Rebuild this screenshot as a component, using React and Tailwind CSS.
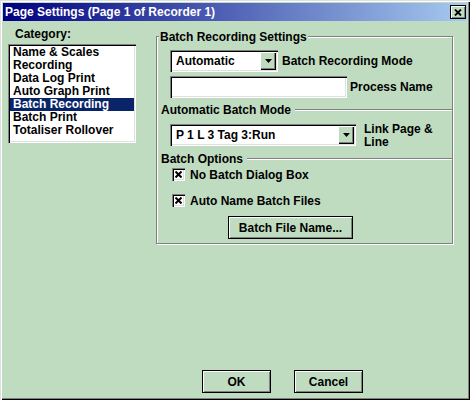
import React from 'react';

const raised = 'border border-black shadow-[inset_1px_1px_0_#fff,inset_-1px_-1px_0_#808080]';
const sunken = 'shadow-[inset_1px_1px_0_#808080,inset_2px_2px_0_#000,inset_-1px_-1px_0_#fff,inset_-2px_-2px_0_#dfdfdf]';

function DropArrow() {
    return (
        <div className="w-[16px] h-[18px] mr-[2px] bg-[#c0dcc0] shadow-[inset_1px_1px_0_#fff,inset_-1px_-1px_0_#000,inset_-2px_-2px_0_#808080] flex items-center justify-center">
            <svg width="7" height="4" viewBox="0 0 7 4">
                <polygon points="0,0 7,0 3.5,4" fill="#000" />
            </svg>
        </div>
    );
}

function Combo({ value, width }) {
    return (
        <div className={`h-[22px] bg-white flex items-center justify-between pl-[6px] ${sunken} ${width}`}>
            <span>{value}</span>
            <DropArrow />
        </div>
    );
}

function Separator({ label }) {
    return (
        <div className="flex items-center h-[14px] pl-[4px]">
            <span className="pr-[4px]">{label}</span>
            <div className="flex-1 h-[2px] border-t border-[#808080] border-b border-b-white" />
        </div>
    );
}

function Check({ label }) {
    return (
        <div className="flex items-center h-[13px] pl-[15px] gap-[5px]">
            <div className={`w-[13px] h-[13px] bg-white flex items-center justify-center ${sunken}`}>
                <svg width="7" height="7" viewBox="0 0 7 7">
                    <path d="M0.5 0.5 L6.5 6.5 M6.5 0.5 L0.5 6.5" stroke="#000" strokeWidth="2" />
                </svg>
            </div>
            <span>{label}</span>
        </div>
    );
}

export default function App() {
    const categories = [
        'Name & Scales',
        'Recording',
        'Data Log Print',
        'Auto Graph Print',
        'Batch Recording',
        'Batch Print',
        'Totaliser Rollover',
    ];

    return (
        <div className="w-[470px] h-[400px] bg-[#c0dcc0] pt-[3px] px-[3px] flex flex-col text-[12px] font-bold text-black font-['Liberation_Sans',Arial,sans-serif] shadow-[inset_1px_1px_0_#dfdfdf,inset_2px_2px_0_#fff,inset_-1px_-1px_0_#000,inset_-2px_-2px_0_#808080]">
            {/* Title bar */}
            <div className="h-[18px] flex items-center justify-between pl-[2px] pr-[1px] text-white bg-[linear-gradient(to_right,#000080,#a6caf0)]">
                <span className="leading-[14px]">Page Settings (Page 1 of Recorder 1)</span>
                <div className={`w-[16px] h-[14px] bg-[#c0dcc0] flex items-center justify-center ${raised}`}>
                    <svg width="8" height="7" viewBox="0 0 8 7">
                        <path d="M1 0.5 L7 6.5 M7 0.5 L1 6.5" stroke="#000" strokeWidth="1.8" />
                    </svg>
                </div>
            </div>

            <div className="flex">
                {/* Category list */}
                <div className="ml-[5px] w-[128px] flex flex-col">
                    <div className="ml-[7px] mt-[6px] h-[14px] leading-[14px]">Category:</div>
                    <div className={`mt-[3px] h-[99px] bg-white p-[2px] ${sunken}`}>
                        {categories.map((c) => (
                            <div
                                key={c}
                                className={`h-[13px] leading-[13px] pl-[3px] ${c === 'Batch Recording' ? 'bg-[#0a246a] text-white' : ''}`}
                            >
                                {c}
                            </div>
                        ))}
                    </div>
                </div>

                {/* Settings group */}
                <div className="ml-[20px] mt-[15px] w-[297px] h-[208px] border border-[#808080] shadow-[inset_1px_1px_0_#fff,1px_1px_0_#fff] flex flex-col">
                    <div className="-mt-[7px] ml-[2px] px-[1px] w-fit h-[14px] leading-[14px] bg-[#c0dcc0]">Batch Recording Settings</div>

                    <div className="mt-[6px] pl-[13px] flex items-center gap-[4px]">
                        <Combo value="Automatic" width="w-[108px]" />
                        <span>Batch Recording Mode</span>
                    </div>

                    <div className="mt-[4px] pl-[13px] flex items-center gap-[3px]">
                        <div className={`w-[177px] h-[22px] bg-white ${sunken}`} />
                        <span>Process Name</span>
                    </div>

                    <div className="mt-[5px]">
                        <Separator label="Automatic Batch Mode" />
                    </div>

                    <div className="mt-[7px] pl-[13px] flex items-start gap-[8px]">
                        <Combo value="P 1 L 3 Tag 3:Run" width="w-[186px]" />
                        <div className="leading-[13px] -mt-[1px]">
                            <div>Link Page &amp;</div>
                            <div>Line</div>
                        </div>
                    </div>

                    <div className="mt-[3px]">
                        <Separator label="Batch Options" />
                    </div>

                    <div className="mt-[2px]">
                        <Check label="No Batch Dialog Box" />
                    </div>
                    <div className="mt-[13px]">
                        <Check label="Auto Name Batch Files" />
                    </div>

                    <div className="mt-[9px] ml-[71px]">
                        <button className={`w-[125px] h-[23px] bg-[#c0dcc0] flex items-center justify-center ${raised}`}>
                            Batch File Name...
                        </button>
                    </div>
                </div>
            </div>

            <div className="flex-1" />

            <div className="flex mb-[7px] ml-[199px] gap-[23px]">
                <button className={`w-[69px] h-[23px] bg-[#c0dcc0] flex items-center justify-center ${raised}`}>OK</button>
                <button className={`w-[69px] h-[23px] bg-[#c0dcc0] flex items-center justify-center ${raised}`}>Cancel</button>
            </div>
        </div>
    );
}
